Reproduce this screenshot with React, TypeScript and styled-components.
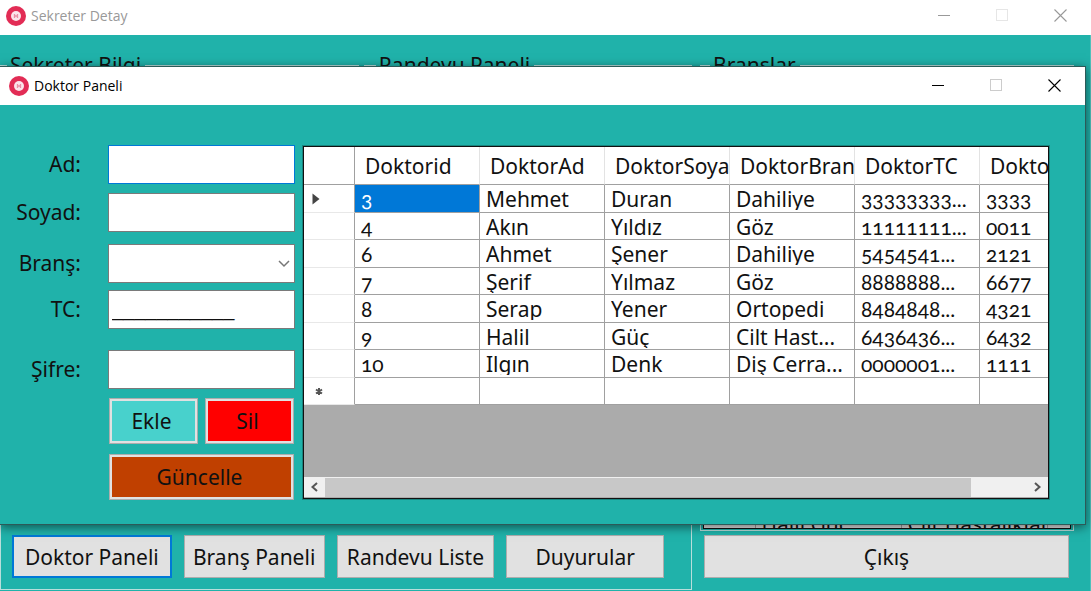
import React from "react";
import styled, { createGlobalStyle, css } from "styled-components";

const TEAL = "#20b2aa";
const UI_FONT = '"Noto Sans", "Open Sans", sans-serif';
const TITLE_FONT = '"Open Sans", "Noto Sans", sans-serif';

const GlobalStyle = createGlobalStyle`
  *, *::before, *::after { box-sizing: border-box; }
  body { margin: 0; background: ${TEAL}; }
  button, input, select { font: inherit; color: inherit; margin: 0; }
`;

const MainWindow = styled.div`
  position: relative;
  display: flex;
  flex-direction: column;
  min-height: 100vh;
  overflow: hidden;
  background: ${TEAL};
  color: #111;
  font-family: ${UI_FONT};
  font-size: 21px;
  line-height: 28px;
`;

const TitleBar = styled.header<{ $active?: boolean }>`
  display: flex;
  align-items: center;
  flex: none;
  height: ${(p) => (p.$active ? 38 : 35)}px;
  padding-left: ${(p) => (p.$active ? 9 : 6)}px;
  padding-bottom: ${(p) => (p.$active ? 1 : 4)}px;
  padding-right: 2px;
  background: #fff;
  color: ${(p) => (p.$active ? "#000" : "#999")};
`;

const TitleText = styled.h1`
  flex: 1;
  margin: 0 0 0 5px;
  font-family: ${TITLE_FONT};
  font-size: 14px;
  font-weight: 400;
  line-height: 20px;
`;

const CaptionButton = styled.button`
  display: flex;
  align-items: center;
  justify-content: center;
  width: 58px;
  height: 30px;
  padding: 0;
  border: 0;
  background: transparent;
`;

const MainBody = styled.main`
  display: grid;
  grid-template-columns: minmax(0, 692fr) minmax(0, 374fr);
  column-gap: 8px;
  flex: 1;
  padding: 16px 16px 1px 0;
  border-right: 1px solid #4fc1bb;
`;

const Column = styled.div`
  display: flex;
  flex-direction: column;
  min-width: 0;
`;

const GroupRow = styled.div`
  display: flex;
  flex: 1;
  gap: 5px;
`;

const GroupBox = styled.fieldset<{ $grow?: number; $open?: boolean }>`
  display: flex;
  flex-direction: column;
  flex: ${(p) => p.$grow ?? 1} 1 0;
  min-width: 0;
  margin: 0;
  padding: 0 2px 1px;
  border: 1px solid #b9dedb;
  ${(p) => p.$open && "border-width: 1px 0 0;"}
`;

const Legend = styled.legend<{ $inset?: number }>`
  margin-left: ${(p) => p.$inset ?? 7}px;
  padding: 0 4px 0 3px;
`;

const ButtonStrip = styled.div`
  display: flex;
  padding: 11px 27px 11px 11px;
  border: 1px solid #b9dedb;
  border-top: 0;
  gap: 12px;
`;

const PlainButton = styled.button<{ $grow?: number; $focused?: boolean }>`
  flex: ${(p) => p.$grow ?? 1} 1 0;
  min-width: 0;
  height: 43px;
  padding: 0;
  border: 1px solid #adadad;
  background: #e1e1e1;
  white-space: nowrap;
  ${(p) =>
    p.$focused &&
    "border-color: #0078d7; box-shadow: inset 0 0 0 1px #0078d7;"}
`;

const ExitRow = styled.div`
  display: flex;
  padding: 4px 5px 12px 4px;
`;

const ListBox = styled.div`
  display: flex;
  flex: 1;
  flex-direction: column;
  justify-content: flex-end;
  overflow: hidden;
  border: 1px solid #111;
  background: #fff;
`;

/* The last row is only partly scrolled into the list. */
const BranchTable = styled.table`
  width: 100%;
  margin-bottom: -10px;
  border-collapse: collapse;
  table-layout: fixed;
  td {
    height: 27px;
    padding: 0 0 0 6px;
    border-left: 1px solid #a0a0a0;
    background: #e6e6e6;
    overflow: hidden;
    white-space: nowrap;
  }
  td:first-child { width: 51px; border-left: 0; }
  td:last-child { width: 23px; }
`;

const DialogLayer = styled.div`
  position: absolute;
  inset: 0;
  overflow: hidden;
  color: #111;
  font-family: ${UI_FONT};
  font-size: 21px;
  line-height: 28px;
`;

const Dialog = styled.section`
  position: absolute;
  top: 66px;
  left: 0;
  right: 5px;
  border: 1px solid #2c5a58;
  border-left: 0;
  background: ${TEAL};
  box-shadow: 0 2px 10px rgba(0, 0, 0, 0.55);
`;

const DialogBody = styled.div`
  display: flex;
  gap: 8px;
  padding: 40px 36px 24px 0;
`;

const DoctorForm = styled.form`
  display: flex;
  flex: none;
  flex-direction: column;
  width: 295px;
`;

const Field = styled.div<{ $before?: number }>`
  display: grid;
  grid-template-columns: 81px 187px;
  align-items: center;
  column-gap: 27px;
  margin-top: ${(p) => p.$before ?? 0}px;
`;

const Label = styled.label`
  padding-bottom: 2px;
  text-align: right;
`;

const boxStyle = css`
  width: 100%;
  height: 39px;
  padding: 0 3px;
  border: 1px solid #7a7a7a;
  border-radius: 0;
  outline: 0;
  background: #fff;
`;

const TextBox = styled.input<{ $focused?: boolean; $masked?: boolean }>`
  ${boxStyle}
  ${(p) => p.$focused && "border-color: #0078d7;"}
  ${(p) => p.$masked && 'font-family: "Liberation Sans", sans-serif; font-size: 20px;'}
`;

const SelectWrap = styled.div`
  position: relative;
  svg {
    position: absolute;
    right: 5px;
    top: 16px;
    pointer-events: none;
  }
`;

const ComboBox = styled.select`
  ${boxStyle}
  display: block;
  appearance: none;
`;

const Actions = styled.div`
  display: grid;
  grid-template-columns: 1fr 1fr;
  gap: 10px 7px;
  margin: 9px 1px 0 109px;
`;

const ActionButton = styled.button<{ $fill: string; $wide?: boolean }>`
  grid-column: ${(p) => (p.$wide ? "1 / -1" : "auto")};
  height: 46px;
  padding: 0 4px 0 0;
  border: 3px solid #e1e1e1;
  outline: 1px solid #adadad;
  outline-offset: -1px;
  background: ${(p) => p.$fill};
`;

const GridView = styled.div`
  display: flex;
  flex: 1;
  flex-direction: column;
  min-width: 0;
  margin: 1px 0;
  border: 1px solid #111;
  outline: 1px solid rgba(0, 0, 0, 0.25);
  background: #ababab;
`;

const GridViewport = styled.div`
  flex: 1;
  overflow: hidden;
`;

const DataTable = styled.table`
  width: 801px;
  border-collapse: separate;
  border-spacing: 0;
  table-layout: fixed;

  th, td {
    padding: 0;
    border: 1px solid #a0a0a0;
    border-width: 0 1px 1px 0;
    background: #fff;
    text-align: left;
    font-weight: 400;
    white-space: nowrap;
    overflow: hidden;
  }
  thead th {
    height: 38px;
    padding-left: 10px;
    border-right-color: #e3e3e3;
  }
  thead th:first-child { border-right-color: #a0a0a0; }
  tbody td { padding-left: 6px; vertical-align: top; }
  tbody th { border-bottom-color: #e8e8e8; padding-left: 8px; }
`;

const Row = styled.tr<{ $tall: boolean }>`
  height: ${(p) => (p.$tall ? 28 : 27)}px;
`;

const CellText = styled.div<{ $numeric?: boolean }>`
  height: 25px;
  line-height: 28px;
  overflow: hidden;
  ${(p) => p.$numeric && 'font-family: "Lato", "Noto Sans", sans-serif; font-variant-numeric: oldstyle-nums;'}
`;

const DataCell = styled.td<{ $selected?: boolean }>`
  && {
    ${(p) => p.$selected && "background: #0078d7; color: #fff;"}
  }
`;

const RowMark = styled.svg`
  display: block;
`;

const ScrollBar = styled.div`
  display: flex;
  flex: none;
  height: 21px;
  border-bottom: 1px solid #ababab;
  background: #f0f0f0;
`;

const ScrollArrow = styled.button`
  display: flex;
  align-items: center;
  justify-content: center;
  flex: none;
  width: 21px;
  padding: 0;
  border: 0;
  background: transparent;
`;

const ScrollTrack = styled.div`
  flex: 1;
  padding: 1px 0 0;
`;

const ScrollThumb = styled.div`
  width: 92%;
  height: 100%;
  background: #c8c8c8;
`;

function AppIcon() {
  return (
    <svg width="20" height="20" viewBox="0 0 20 20" aria-hidden="true">
      <circle cx="10" cy="10" r="10" fill="#e22c55" />
      <circle cx="10" cy="10" r="5" fill="#fbe4ea" />
      <path d="M8.500 8v4M11.500 8v4M8.500 10h3" stroke="#ea8fa5" strokeWidth="1.300" fill="none" />
    </svg>
  );
}

function CaptionButtons({ faded }: { faded?: boolean }) {
  const box = faded ? "#e6e6e6" : "#ccc";
  return (
    <>
      <CaptionButton type="button" aria-label="Simge durumuna küçült">
        <svg width="13" height="13" viewBox="0 0 13 13" shapeRendering="crispEdges">
          <path d="M0 6.500H12" stroke="currentColor" />
        </svg>
      </CaptionButton>
      <CaptionButton type="button" aria-label="Ekranı kapla" disabled>
        <svg width="13" height="13" viewBox="0 0 13 13" shapeRendering="crispEdges">
          <rect x="0.5" y="0.5" width="11" height="11" fill="none" stroke={box} />
        </svg>
      </CaptionButton>
      <CaptionButton type="button" aria-label="Kapat">
        <svg width="13" height="13" viewBox="0 0 13 13">
          <path d="M0.500 0.500l12 12M12.500 0.500l-12 12" stroke="currentColor" strokeWidth="1.100" />
        </svg>
      </CaptionButton>
    </>
  );
}

const columns = ["Doktorid", "DoktorAd", "DoktorSoyad", "DoktorBrans", "DoktorTC", "DoktorSifre"];

const doctors = [
  ["3", "Mehmet", "Duran", "Dahiliye", "33333333...", "3333"],
  ["4", "Akın", "Yıldız", "Göz", "11111111...", "0011"],
  ["6", "Ahmet", "Şener", "Dahiliye", "5454541...", "2121"],
  ["7", "Şerif", "Yılmaz", "Göz", "8888888...", "6677"],
  ["8", "Serap", "Yener", "Ortopedi", "8484848...", "4321"],
  ["9", "Halil", "Güç", "Cilt Hast...", "6436436...", "6432"],
  ["10", "Ilgın", "Denk", "Diş Cerra...", "0000001...", "1111"],
  ["", "", "", "", "", ""],
];

const numericColumns = [0, 4, 5];

function DoctorGrid() {
  return (
    <GridView>
      <GridViewport>
        <DataTable>
          <colgroup>
            <col width={51} />
            {columns.map((c) => (
              <col key={c} width={125} />
            ))}
          </colgroup>
          <thead>
            <tr>
              <th aria-label="Satır" />
              {columns.map((c) => (
                <th key={c} scope="col">{c}</th>
              ))}
            </tr>
          </thead>
          <tbody>
            {doctors.map((d, r) => (
              <Row key={r} $tall={r % 2 === 0}>
                <th scope="row" aria-label={`Satır ${r + 1}`}>
                  {r === 0 && (
                    <RowMark width="12" height="12" viewBox="0 0 12 12">
                      <path d="M0.500 0.500v11l7-5.500z" fill="#444" />
                    </RowMark>
                  )}
                  {r === doctors.length - 1 && (
                    <RowMark width="14" height="10" viewBox="0 0 14 10">
                      <path d="M7 2v7M4 3.500l6 4M4 7.500l6-4" stroke="#555" strokeWidth="2" />
                    </RowMark>
                  )}
                </th>
                {d.map((v, c) => (
                  <DataCell key={c} $selected={r === 0 && c === 0}>
                    <CellText $numeric={numericColumns.includes(c)}>{v}</CellText>
                  </DataCell>
                ))}
              </Row>
            ))}
          </tbody>
        </DataTable>
      </GridViewport>
      <ScrollBar>
        <ScrollArrow type="button" aria-label="Sola kaydır">
          <svg width="10" height="10" viewBox="0 0 10 10">
            <path d="M7 1L2.500 5L7 9" fill="none" stroke="#555" strokeWidth="2" />
          </svg>
        </ScrollArrow>
        <ScrollTrack>
          <ScrollThumb />
        </ScrollTrack>
        <ScrollArrow type="button" aria-label="Sağa kaydır">
          <svg width="10" height="10" viewBox="0 0 10 10">
            <path d="M2 1L6.500 5L2 9" fill="none" stroke="#555" strokeWidth="2" />
          </svg>
        </ScrollArrow>
      </ScrollBar>
    </GridView>
  );
}

function DoctorDialog() {
  return (
    <Dialog role="dialog" aria-label="Doktor Paneli">
      <TitleBar $active>
        <AppIcon />
        <TitleText>Doktor Paneli</TitleText>
        <CaptionButtons />
      </TitleBar>
      <DialogBody>
        <DoctorForm>
          <Field>
            <Label htmlFor="ad">Ad:</Label>
            <TextBox id="ad" $focused />
          </Field>
          <Field $before={9}>
            <Label htmlFor="soyad">Soyad:</Label>
            <TextBox id="soyad" />
          </Field>
          <Field $before={12}>
            <Label htmlFor="brans">Branş:</Label>
            <SelectWrap>
              <ComboBox id="brans" defaultValue="">
                <option value="" />
              </ComboBox>
              <svg width="12" height="8" viewBox="0 0 12 8" aria-hidden="true">
                <path d="M1 1l5 5 5-5" fill="none" stroke="#777" strokeWidth="1.500" />
              </svg>
            </SelectWrap>
          </Field>
          <Field $before={7}>
            <Label htmlFor="tc">TC:</Label>
            <TextBox id="tc" $masked defaultValue="___________" />
          </Field>
          <Field $before={21}>
            <Label htmlFor="sifre">Şifre:</Label>
            <TextBox id="sifre" />
          </Field>
          <Actions>
            <ActionButton type="button" $fill="#48d1cc">Ekle</ActionButton>
            <ActionButton type="button" $fill="#ff0000">Sil</ActionButton>
            <ActionButton type="button" $fill="#c04000" $wide>Güncelle</ActionButton>
          </Actions>
        </DoctorForm>
        <DoctorGrid />
      </DialogBody>
    </Dialog>
  );
}

export default function App() {
  return (
    <>
      <GlobalStyle />
      <MainWindow>
        <TitleBar>
          <AppIcon />
          <TitleText>Sekreter Detay</TitleText>
          <CaptionButtons faded />
        </TitleBar>
        <MainBody>
          <Column>
            <GroupRow>
              <GroupBox $grow={359} $open>
                <Legend $inset={5}>Sekreter Bilgi</Legend>
              </GroupBox>
              <GroupBox $grow={328} $open>
                <Legend $inset={10}>Randevu Paneli</Legend>
              </GroupBox>
            </GroupRow>
            <ButtonStrip>
              <PlainButton type="button" $grow={160} $focused>Doktor Paneli</PlainButton>
              <PlainButton type="button" $grow={141}>Branş Paneli</PlainButton>
              <PlainButton type="button" $grow={158}>Randevu Liste</PlainButton>
              <PlainButton type="button" $grow={158}>Duyurular</PlainButton>
            </ButtonStrip>
          </Column>
          <Column>
            <GroupBox>
              <Legend>Branşlar</Legend>
              <ListBox>
                <BranchTable>
                  <tbody>
                    <tr>
                      <td />
                      <td>Halil Güç</td>
                      <td>Cilt Hastalıkları</td>
                      <td />
                    </tr>
                  </tbody>
                </BranchTable>
              </ListBox>
            </GroupBox>
            <ExitRow>
              <PlainButton type="button">Çıkış</PlainButton>
            </ExitRow>
          </Column>
        </MainBody>
      </MainWindow>
      <DialogLayer>
        <DoctorDialog />
      </DialogLayer>
    </>
  );
}
